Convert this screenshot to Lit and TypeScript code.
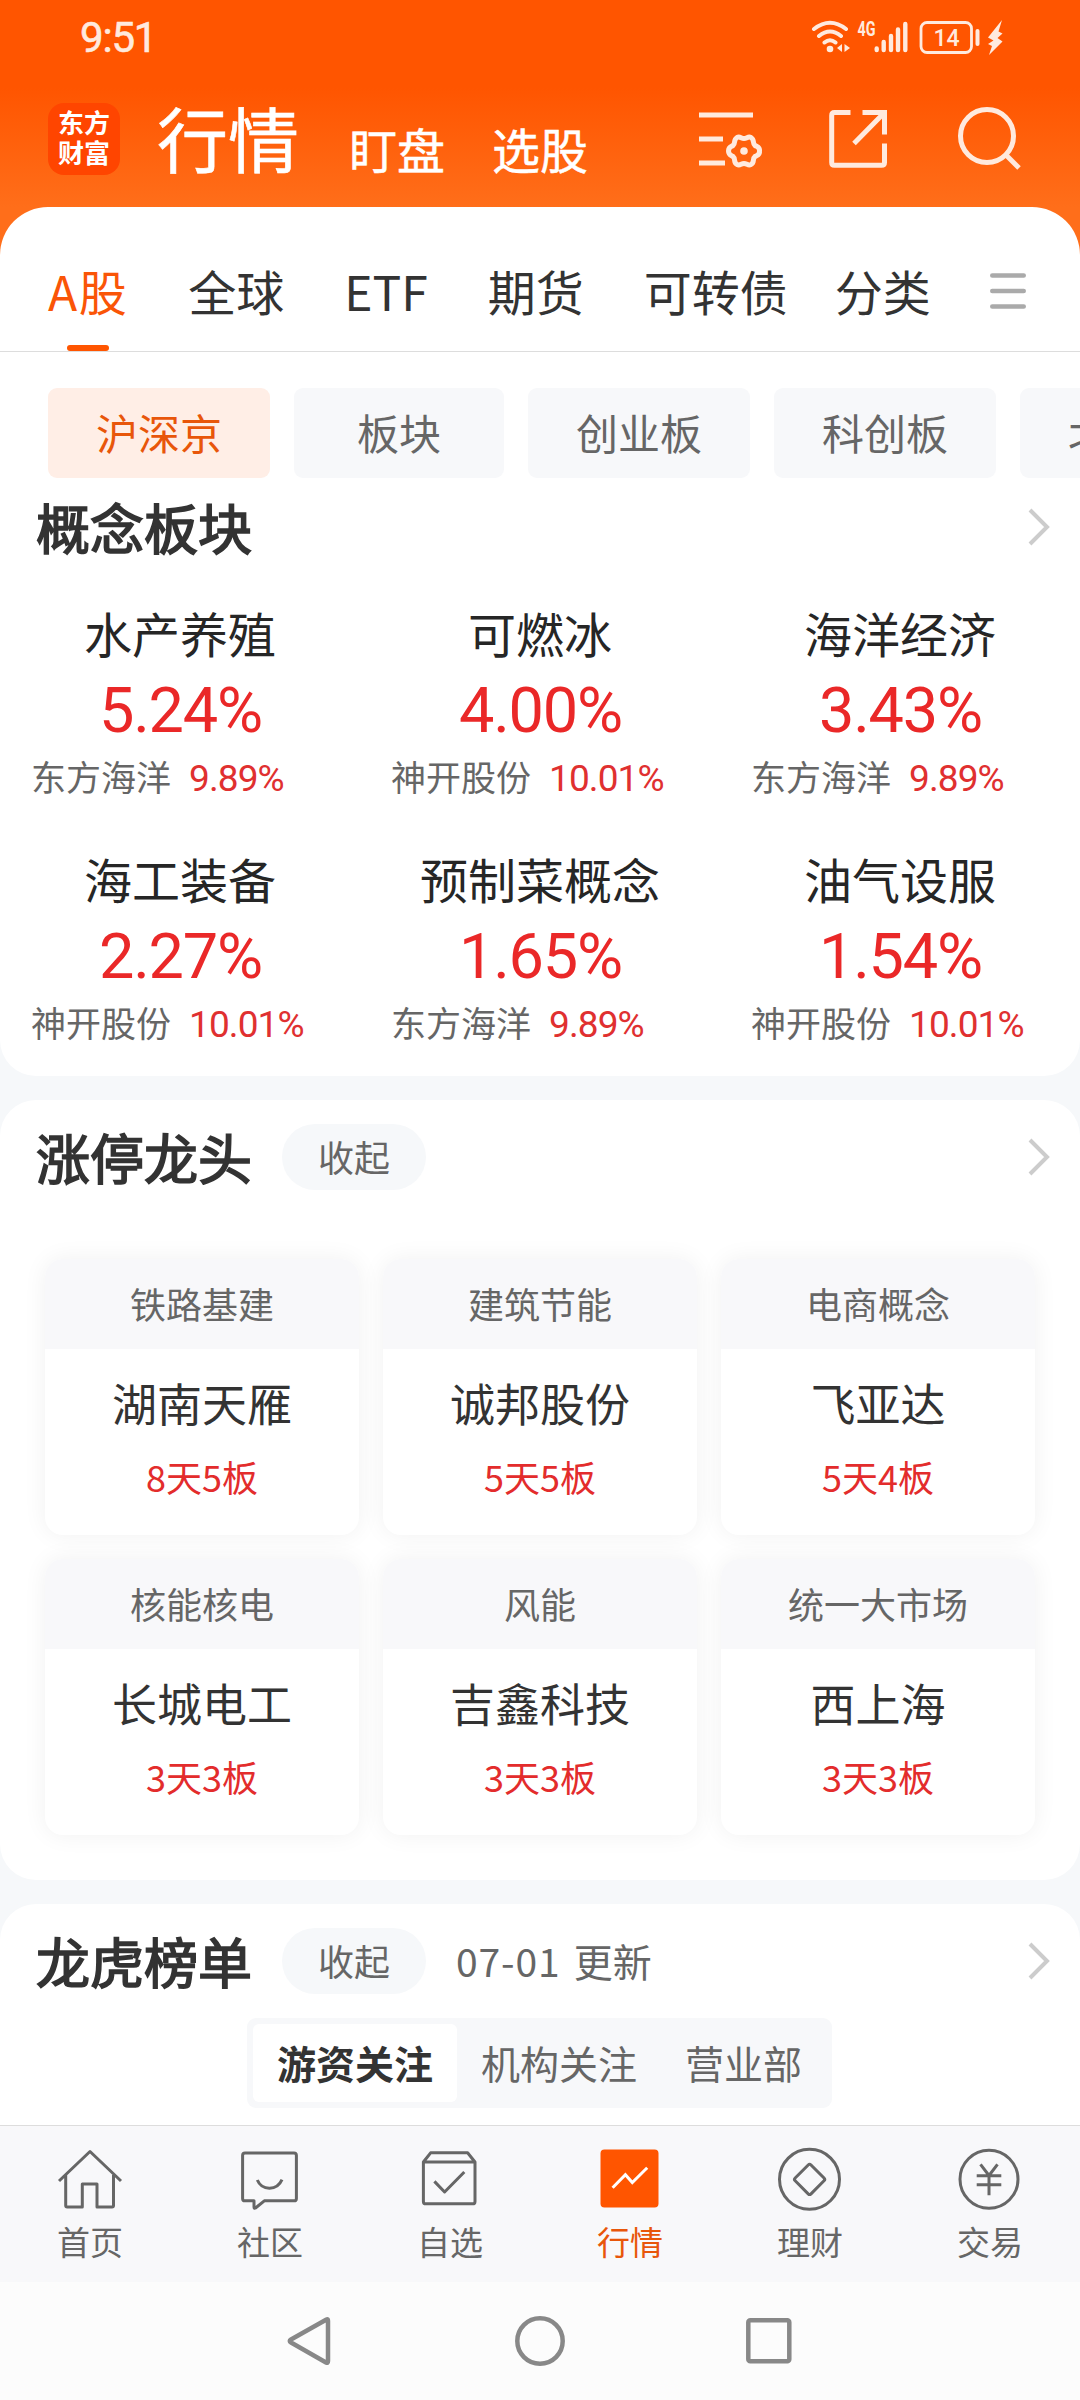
import { LitElement, html, css, svg } from "lit";
import { customElement, property } from "lit/decorators.js";
import { classMap } from "lit/directives/class-map.js";

interface Concept { name: string; pct: string; stock: string; stockPct: string; }
interface Leader { board: string; name: string; streak: string; }

const TABS = ["A股", "全球", "ETF", "期货", "可转债", "分类"];
const CHIPS = ["沪深京", "板块", "创业板", "科创板", "北交所"];

const CONCEPTS: Concept[] = [
  { name: "水产养殖", pct: "5.24%", stock: "东方海洋", stockPct: "9.89%" },
  { name: "可燃冰", pct: "4.00%", stock: "神开股份", stockPct: "10.01%" },
  { name: "海洋经济", pct: "3.43%", stock: "东方海洋", stockPct: "9.89%" },
  { name: "海工装备", pct: "2.27%", stock: "神开股份", stockPct: "10.01%" },
  { name: "预制菜概念", pct: "1.65%", stock: "东方海洋", stockPct: "9.89%" },
  { name: "油气设服", pct: "1.54%", stock: "神开股份", stockPct: "10.01%" },
];

const LEADERS: Leader[] = [
  { board: "铁路基建", name: "湖南天雁", streak: "8天5板" },
  { board: "建筑节能", name: "诚邦股份", streak: "5天5板" },
  { board: "电商概念", name: "飞亚达", streak: "5天4板" },
  { board: "核能核电", name: "长城电工", streak: "3天3板" },
  { board: "风能", name: "吉鑫科技", streak: "3天3板" },
  { board: "统一大市场", name: "西上海", streak: "3天3板" },
];

const NAV = [
  {
    label: "首页",
    icon: svg`<path d="M2 35 33 5.5 64 35M8.7 29V59.5Q8.7 61 10.2 61H25.3V38H40V61H55Q56.5 61 56.5 59.5V29"/>`,
  },
  {
    label: "社区",
    icon: svg`<path d="M8 7H57Q59.4 7 59.4 9.4V52.4Q59.4 54.8 57 54.8H27.3L18.5 62Q17 62.8 17 61V54.8H8Q5.6 54.8 5.6 52.4V9.4Q5.6 7 8 7ZM20.3 34C25 45 40 45 45 33.6"/>`,
  },
  {
    label: "自选",
    icon: svg`<path d="M6.4 16 13.6 6.8H50.6L58 16V55.4Q58 57.8 55.6 57.8H8.8Q6.4 57.8 6.4 55.4ZM6.4 16H58M17.4 35.4 27.6 46 47.3 26"/>`,
  },
  {
    label: "行情",
    active: true,
    icon: svg`<rect class="solid" x="3.5" y="3.5" width="58" height="58" rx="4"/><path class="light" d="M15.6 41.8 28.4 28.8 35.3 36.6 50.2 21.8"/>`,
  },
  {
    label: "理财",
    icon: svg`<circle cx="32.5" cy="33.3" r="30"/><rect x="21.4" y="22.2" width="22.4" height="22.4" rx="2" transform="rotate(45 32.6 33.4)"/>`,
  },
  {
    label: "交易",
    icon: svg`<circle cx="32" cy="33.3" r="29"/><path d="M23.5 18.3 32 29.5 40.5 18.3M19.7 29.7H44.3M19.7 38.7H44.3M32 29V49.3"/>`,
  },
];

@customElement("section-head")
export class SectionHead extends LitElement {
  @property() heading = "";
  @property({ type: Boolean }) foldable = false;
  @property() date = "";

  static styles = css`
    :host {
      display: flex;
      align-items: center;
      padding: 0 30px 0 36px;
      height: 66px;
    }
    .title {
      font-size: 54px;
      line-height: 66px;
      -webkit-text-stroke: 1.7px #333;
      color: #333;
      height: 66px;
    }
    .pill {
      margin-left: 30px;
      width: 144px;
      height: 66px;
      border-radius: 33px;
      background: #f6f8fa;
      text-align: center;
      font-size: 36px;
      line-height: 65px;
      color: #666;
    }
    .note {
      display: flex;
      gap: 13px;
      margin-left: 30px;
      font-size: 39px;
      line-height: 65px;
      height: 66px;
      color: #666;
    }
    .date { letter-spacing: 0.9px; }
    .arrow {
      margin-left: auto;
      width: 22px;
      height: 38px;
      fill: none;
      stroke: #ccc;
      stroke-width: 4;
    }
  `;

  render() {
    return html`
      <div class="title">${this.heading}</div>
      ${this.foldable ? html`<div class="pill">收起</div>` : null}
      ${this.date ? html`<div class="note"><span class="date">${this.date}</span><span>更新</span></div>` : null}
      <svg class="arrow" viewBox="0 0 22 38"><path d="M2 2 19 19 2 36" /></svg>
    `;
  }
}

@customElement("app-root")
export class AppRoot extends LitElement {
  static styles = css`
    :host {
      display: flex;
      flex-direction: column;
      width: 1080px;
      height: 2400px;
      overflow: hidden;
      background: #f6f8fa;
      font-family: "Noto Sans CJK SC", sans-serif;
      color: #333;
      white-space: nowrap;
    }
    svg { display: block; flex: none; }

    .top {
      flex: none;
      height: 255px;
      margin-bottom: -48px;
      background: linear-gradient(#ff5500 88px, #ff6e1a 207px);
    }
    .status {
      display: flex;
      align-items: center;
      height: 76px;
      padding: 0 74px 0 80px;
      justify-content: space-between;
    }
    .clock {
      font: 400 42px/78px Roboto, sans-serif;
      letter-spacing: -1.2px;
      color: #ffeade;
      -webkit-text-stroke: 0.6px #ffeade;
    }
    .signals { width: 196px; height: 40px; margin-top: -3px; fill: #ffeade; }
    .signals .line { fill: none; stroke: #ffeade; stroke-linecap: round; }
    .net { font: 700 20px Roboto, sans-serif; }
    .level { font: 500 23px Roboto, sans-serif; }
    .bar {
      display: flex;
      height: 131px;
      padding-left: 48px;
    }
    .logo {
      display: flex;
      flex-direction: column;
      width: 72px;
      height: 60px;
      padding: 4px 0 8px;
      margin-top: 27px;
      border-radius: 16px;
      background: #ff4500;
      color: #fff;
      text-align: center;
      font-size: 26px;
      line-height: 30px;
      font-weight: 700;
    }
    .place {
      font-size: 71px;
      line-height: 80px;
      margin: 20px 0 0 37px;
      color: #fff;
      -webkit-text-stroke: 0.6px #fff;
    }
    .other {
      font-size: 48px;
      line-height: 60px;
      margin: 42px 0 0 50px;
      color: #fff;
      -webkit-text-stroke: 0.5px #fff;
    }
    .other + .other { margin-left: 47px; }
    .actions {
      display: flex;
      justify-content: space-between;
      width: 324px;
      margin: 30px 0 0 109px;
    }
    .actions svg {
      width: 66px;
      height: 66px;
      fill: none;
      stroke: #ffeade;
      stroke-width: 5;
    }

    .scroll { flex: 1; min-height: 0; overflow: hidden; display: flex; flex-direction: column; gap: 24px; }
    .card { flex: none; background: #fff; border-radius: 36px; }
    .card.first { height: 869px; border-radius: 48px 48px 36px 36px; }

    .tabs {
      display: flex;
      height: 144px;
      padding-left: 48px;
      border-bottom: 1px solid #ddd;
      font-size: 48px;
      line-height: 60px;
    }
    .tab {
      display: flex;
      flex-direction: column;
      align-items: center;
      justify-content: space-between;
      margin-right: 60px;
      padding-top: 53px;
    }
    .tab:nth-child(5) { margin-right: 47px; }
    .tab.active { color: #fa5507; letter-spacing: 1.5px; }
    .tab.active::after {
      content: "";
      width: 42px;
      height: 6px;
      border-radius: 3px;
      background: #ff5500;
    }
    .menu { width: 36px; height: 36px; margin: 66px 0 0 -1px; stroke: #aaa; stroke-width: 4.6; stroke-linecap: round; }

    .chips {
      display: flex;
      gap: 24px;
      padding: 36px 0 0 48px;
      overflow: hidden;
    }
    .chip {
      flex: none;
      box-sizing: border-box;
      min-width: 210px;
      height: 90px;
      padding: 0 48px;
      border-radius: 9px;
      background: #f7f8fa;
      color: #666;
      text-align: center;
      font-size: 42px;
      line-height: 88px;
    }
    .chip.active { background: #ffeee6; color: #e8560a; }
    .first section-head { margin-top: 16px; }

    .concepts {
      display: grid;
      grid-template-columns: repeat(3, 360px);
      grid-auto-rows: 246px;
      margin-top: 42px;
    }
    .concept { text-align: center; }
    .c-name { font-size: 48px; line-height: 60px; color: #262626; }
    .c-pct {
      font: 400 63px/74px Roboto, sans-serif;
      letter-spacing: -1.2px;
      margin-top: 12px;
      padding-left: 1px;
      color: #ea2828;
    }
    .c-stock {
      display: flex;
      gap: 18px;
      padding-left: 31px;
      margin-top: 5px;
      font-size: 35px;
      line-height: 46px;
      color: #666;
    }
    .c-stock .num {
      font: 400 37px/51px Roboto, sans-serif;
      letter-spacing: -0.9px;
      color: #e03030;
    }

    .second { height: 780px; }
    .second section-head, .third section-head { padding-top: 24px; }
    .leaders {
      display: grid;
      grid-template-columns: repeat(3, 314px);
      gap: 24px;
      padding: 69px 0 0 45px;
    }
    .leader {
      height: 276px;
      border-radius: 18px;
      background: #fff;
      overflow: hidden;
      text-align: center;
      box-shadow: 0 0 24px rgba(0, 0, 0, 0.06);
    }
    .l-board { height: 90px; line-height: 89px; font-size: 36px; background: #f8f8fa; color: #666; }
    .l-name { margin-top: 24px; font-size: 45px; line-height: 60px; }
    .l-streak { margin-top: 15px; font-size: 36px; line-height: 56px; color: #e32c2c; }

    .third { height: 324px; }
    .segments {
      display: flex;
      width: 573px;
      height: 78px;
      padding: 6px;
      margin: 24px 0 0 247px;
      border-radius: 9px;
      background: #f7f8fa;
      font-size: 39px;
      line-height: 76px;
      color: #666;
    }
    .segment { padding: 0 24px; border-radius: 6px; }
    .segment.active { background: #fff; color: #333; font-weight: 700; }

    .nav {
      flex: none;
      display: grid;
      grid-template-columns: repeat(6, 180px);
      height: 157px;
      border-top: 1px solid #ddd;
      box-sizing: border-box;
      background: #f8f8fa;
    }
    .item {
      display: flex;
      flex-direction: column;
      align-items: center;
      padding-top: 20px;
      font-size: 33px;
      line-height: 40px;
      color: #666;
    }
    .item.active { color: #e8560a; }
    .item svg { width: 66px; height: 66px; margin-bottom: 9px; fill: none; stroke: #666; stroke-width: 3; stroke-linejoin: round; }
    .item .solid { fill: #ff5500; stroke: none; }
    .item .light { stroke: #fff; stroke-linejoin: miter; }

    .system {
      flex: none;
      display: flex;
      justify-content: center;
      align-items: center;
      gap: 177px;
      height: 118px;
      background: #fcfcfc;
    }
    .system svg { width: 52px; height: 52px; fill: none; stroke: #888; stroke-width: 4.5; stroke-linejoin: round; }
  `;

  private renderStatus() {
    return html`
      <div class="status">
        <div class="clock">9:51</div>
        <svg class="signals" viewBox="810 16 196 40">
          <path class="line" stroke-width="4" d="M814 28Q830 15.500 846 28M819 35Q830 26 841 35M824.500 41.500Q830 37 835.500 41.500" />
          <circle cx="830" cy="48" r="3.3" />
          <path d="M842 43V51L837 47ZM844.500 43V51L850 47Z" />
          <text class="net" x="857.500" y="35" textLength="18" lengthAdjust="spacingAndGlyphs">4G</text>
          <path class="line" stroke-width="4.400" d="M876.700 47.500V49M883.700 41V49M891 35V49M898 28.500V49M905.300 23V49" />
          <rect class="line" x="921" y="21.500" width="50.500" height="30" rx="6" stroke-width="2.800" />
          <path class="line" stroke-width="4" d="M977.500 30V43" />
          <text class="level" x="933.500" y="45" textLength="26">14</text>
          <path d="M1002 19 988 36.500 993.500 39.500 988 43 992 45 989 54 1002.500 40.500 997.500 37 1002.500 32.500 998.500 30.500Z" />
        </svg>
      </div>
    `;
  }

  private renderBar() {
    return html`
      <div class="bar">
        <div class="logo"><span>东方</span><span>财富</span></div>
        <div class="place">行情</div>
        <div class="other">盯盘</div>
        <div class="other">选股</div>
        <div class="actions">
          <svg viewBox="697 106 66 66">
            <path d="M699 115H753M699 139H723M699 163H725" />
            <path stroke-linejoin="round" d="M744 138.500C747 138.500 748 136 751 137.500C755 140 752 143 755 145.500C757.500 147 760 147 759.500 151C760 155 757.500 155 755 156.500C752 159 755 162 751 164.500C748 166 747 163.500 744 163.500C741 163.500 740 166 737 164.500C733 162 736 159 733 156.500C730.500 155 728.500 155 728.500 151C728.500 147 730.500 147 733 145.500C736 143 733 140 737 137.500C740 136 741 138.500 744 138.500Z" />
            <circle cx="744" cy="151" r="3.800" fill="#ffeade" stroke="none" />
          </svg>
          <svg viewBox="826 106 66 66">
            <path d="M850.500 112.500H834.500Q831.700 112.500 831.700 115.500V162.500Q831.700 165.300 834.500 165.300H881.500Q884.500 165.300 884.500 162.500V143.500M862.500 112.500H884.500V134.500M884 113 854 143.500" />
          </svg>
          <svg viewBox="955 106 66 66">
            <circle cx="987" cy="136" r="26.500" />
            <path d="M1006 155 1019 168" />
          </svg>
        </div>
      </div>
    `;
  }

  render() {
    return html`
      <header class="top">${this.renderStatus()}${this.renderBar()}</header>
      <main class="scroll">
        <section class="card first">
          <div class="tabs">
            ${TABS.map((t, i) => html`<div class=${classMap({ tab: true, active: i === 0 })}><span>${t}</span></div>`)}
            <svg class="menu" viewBox="0 0 36 36"><path d="M2.300 2.500H33.700M2.300 18H33.700M2.300 33.500H33.700" /></svg>
          </div>
          <div class="chips">
            ${CHIPS.map((c, i) => html`<div class=${classMap({ chip: true, active: i === 0 })}>${c}</div>`)}
          </div>
          <section-head heading="概念板块"></section-head>
          <div class="concepts">
            ${CONCEPTS.map(
              (c) => html`
                <div class="concept">
                  <div class="c-name">${c.name}</div>
                  <div class="c-pct">${c.pct}</div>
                  <div class="c-stock"><span>${c.stock}</span><span class="num">${c.stockPct}</span></div>
                </div>
              `
            )}
          </div>
        </section>
        <section class="card second">
          <section-head heading="涨停龙头" foldable></section-head>
          <div class="leaders">
            ${LEADERS.map(
              (l) => html`
                <div class="leader">
                  <div class="l-board">${l.board}</div>
                  <div class="l-name">${l.name}</div>
                  <div class="l-streak">${l.streak}</div>
                </div>
              `
            )}
          </div>
        </section>
        <section class="card third">
          <section-head heading="龙虎榜单" foldable date="07-01"></section-head>
          <div class="segments">
            <div class="segment active">游资关注</div>
            <div class="segment">机构关注</div>
            <div class="segment">营业部</div>
          </div>
        </section>
      </main>
      <nav class="nav">
        ${NAV.map(
          (n) => html`
            <div class=${classMap({ item: true, active: !!n.active })}>
              <svg viewBox="0 0 66 66">${n.icon}</svg>
              <span>${n.label}</span>
            </div>
          `
        )}
      </nav>
      <div class="system">
        <svg viewBox="0 0 52 52"><path d="M41.500 4.500Q43 3.500 43 6V46Q43 48.500 41 47.500L6 27.500Q3.500 26 6 24.500Z" /></svg>
        <svg viewBox="0 0 52 52"><circle cx="26" cy="26" r="22.700" /></svg>
        <svg viewBox="0 0 52 52"><rect x="5.300" y="5.300" width="41" height="41" rx="2" /></svg>
      </div>
    `;
  }
}
